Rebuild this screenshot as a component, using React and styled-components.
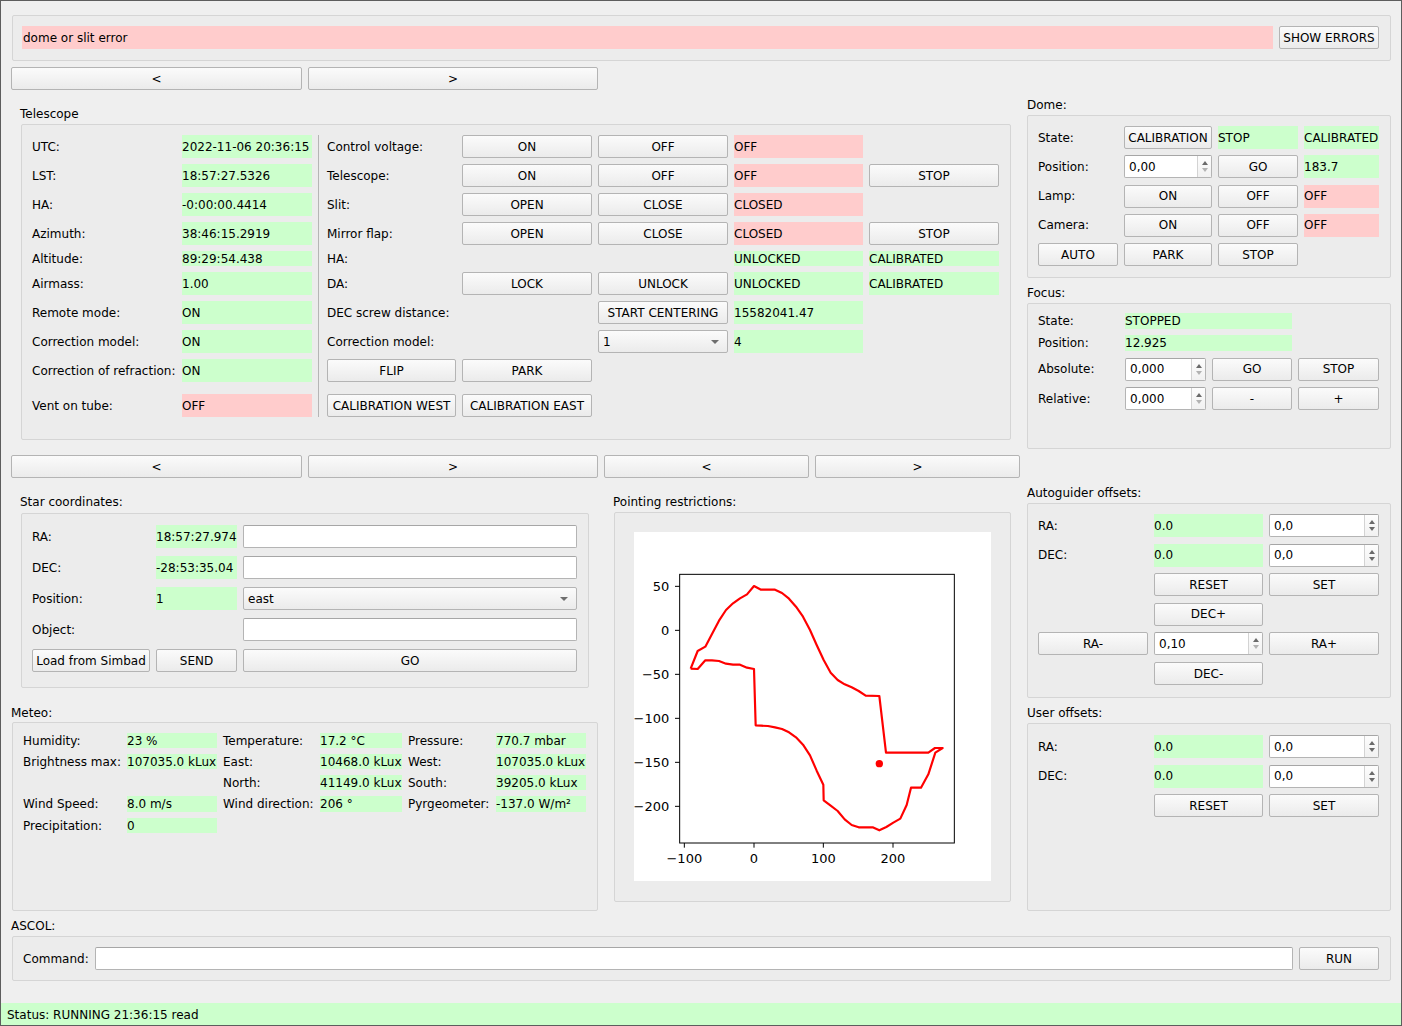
import React from 'react';
import styled, { createGlobalStyle, css } from 'styled-components';

const Global = createGlobalStyle`
  * { box-sizing: border-box; }
  html, body { margin: 0; padding: 0; background: #efefef; }
  body { font-family: "DejaVu Sans", "Liberation Sans", sans-serif; font-size: 12px; color: #000; }
`;

const cellMix = css`
  grid-column: span ${p => p.$span || 1};
  ${p => p.$end && css`align-self: end; height: 23px;`}
`;

const Window = styled.div`
  width: 1402px;
  height: 1026px;
  border: 1px solid #5d5d5d;
  background: #efefef;
  display: flex;
  flex-direction: column;
  font-family: "DejaVu Sans", "Liberation Sans", sans-serif;
  font-size: 12px;
  color: #000;
  overflow: hidden;
`;

const Body = styled.div`
  flex: 1;
  padding: 14px 10px 0;
  display: flex;
  flex-direction: column;
`;

const Group = styled.div`
  background: #ececec;
  border: 1px solid #d5d5d5;
  border-radius: 2px;
  width: ${p => p.$w}px;
  margin-left: ${p => p.$ml || 0}px;
  padding: ${p => p.$pad};
`;

const ErrorGroup = styled(Group)`
  display: flex;
  gap: 6px;
`;

const ErrorText = styled.div`
  flex: 1;
  height: 23px;
  background: #ffcccc;
  display: flex;
  align-items: center;
  padding-left: 1px;
`;

const Title = styled.div`
  height: 14px;
  line-height: 16px;
  white-space: nowrap;
  margin-top: ${p => p.$mt || 0}px;
  margin-bottom: ${p => (p.$mb === undefined ? 4 : p.$mb)}px;
  margin-left: ${p => p.$ml || 0}px;
`;

const Btn = styled.button`
  height: 23px;
  width: ${p => (p.$w ? `${p.$w}px` : '100%')};
  flex: none;
  padding: 0;
  margin: 0;
  font: inherit;
  color: #000;
  border: 1px solid #b4b4b4;
  border-radius: 2px;
  background: linear-gradient(to bottom, #fbfbfb, #ebebeb);
  white-space: nowrap;
  overflow: hidden;
  ${cellMix}
`;

const Val = styled.div`
  background: ${p => (p.$bad ? '#ffcccc' : '#ccffcc')};
  display: flex;
  align-items: center;
  white-space: nowrap;
  overflow: hidden;
  ${cellMix}
`;

const Lbl = styled.div`
  display: flex;
  align-items: center;
  white-space: nowrap;
  ${cellMix}
`;

const Grid = styled.div`
  display: grid;
  grid-template-columns: ${p => p.$cols};
  grid-template-rows: ${p => p.$rows};
  column-gap: 6px;
  row-gap: ${p => p.$rg}px;
`;

const Sep = styled.div`
  grid-column: 3;
  grid-row: 1 / -1;
  border-left: 1px solid #b5b5b5;
`;

const MainRow = styled.div`
  display: flex;
  gap: 7px;
  margin-top: 6px;
`;

const Col = styled.div`
  width: ${p => p.$w}px;
  display: flex;
  flex-direction: column;
`;

const NavRow = styled.div`
  display: flex;
  gap: 6px;
  margin-top: ${p => p.$mt || 0}px;
`;

const LowerRow = styled.div`
  display: flex;
  gap: 6px;
`;

const Field = styled.div`
  height: 23px;
  background: #fff;
  border: 1px solid #b4b4b4;
  border-top-color: #a6a6a6;
  border-radius: 2px;
  display: flex;
  align-items: stretch;
  overflow: hidden;
  ${p => p.$flex && 'flex: 1;'}
  ${cellMix}
`;

const FieldText = styled.div`
  flex: 1;
  display: flex;
  align-items: center;
  padding-left: 4px;
  white-space: nowrap;
`;

const SpinArrows = styled.div`
  width: 14px;
  border-left: 1px solid #d3d3d3;
  background: linear-gradient(to bottom, #fdfdfd, #f1f1f1);
  display: flex;
  flex-direction: column;
  align-items: center;
  justify-content: center;
  gap: 3px;
`;

const ArrowUp = styled.div`
  width: 0;
  height: 0;
  border-left: 3.5px solid transparent;
  border-right: 3.5px solid transparent;
  border-bottom: 4px solid ${p => p.$c};
`;

const ArrowDown = styled.div`
  width: 0;
  height: 0;
  border-left: 3.5px solid transparent;
  border-right: 3.5px solid transparent;
  border-top: 4px solid ${p => p.$c};
`;

const Combo = styled.div`
  height: 23px;
  border: 1px solid #b4b4b4;
  border-radius: 2px;
  background: linear-gradient(to bottom, #fbfbfb, #ebebeb);
  display: flex;
  align-items: center;
  justify-content: space-between;
  padding: 0 8px 0 4px;
  ${cellMix}
`;

const ComboArrow = styled.div`
  width: 0;
  height: 0;
  border-left: 4px solid transparent;
  border-right: 4px solid transparent;
  border-top: 4px solid #6e6e6e;
`;

const CmdRow = styled(Group)`
  display: flex;
  align-items: center;
  gap: 6px;
`;

const StatusBar = styled.div`
  height: 22px;
  background: #ccffcc;
  display: flex;
  align-items: center;
  padding-left: 6px;
  padding-top: 1px;
  margin-top: auto;
  flex: none;
`;

const ChartBox = styled.div`
  width: 357px;
  height: 349px;
  background: #fff;
  svg { display: block; }
`;

const Spin = ({ v, dim, ...rest }) => (
  <Field {...rest}>
    <FieldText>{v}</FieldText>
    <SpinArrows>
      <ArrowUp $c="#6a6a6a" />
      <ArrowDown $c={dim ? '#b2b2b2' : '#6a6a6a'} />
    </SpinArrows>
  </Field>
);

const E = () => <span />;

const curve = [
  [272, 566], [293, 513], [316, 500], [336, 462], [357, 422], [378, 390], [399, 370], [420, 355],
  [441, 343], [462, 318], [483, 329], [525, 329], [546, 339], [567, 356], [588, 380], [609, 410],
  [630, 450], [650, 495], [671, 540], [692, 578], [713, 600], [734, 613], [755, 622], [776, 633],
  [797, 647], [838, 648], [858, 818], [985, 818], [1005, 804], [1028, 804], [1006, 818], [985, 883],
  [963, 923], [933, 923], [920, 975], [901, 1016], [880, 1028], [859, 1041], [838, 1051], [818, 1042],
  [776, 1042], [755, 1035], [734, 1018], [713, 993], [692, 977], [671, 961], [670, 914], [650, 872],
  [630, 826], [609, 794], [588, 772], [567, 757], [546, 747], [525, 742], [504, 738], [483, 737],
  [467, 736], [462, 567], [441, 563], [420, 554], [399, 554], [378, 551], [357, 543], [336, 541],
  [316, 541], [293, 567], [272, 566],
];

const yTicks = [[319, '50'], [451, '0'], [583, '\u221250'], [715, '\u2212100'], [847, '\u2212150'], [979, '\u2212200']];
const xTicks = [[253, '\u2212100'], [462, '0'], [670, '100'], [879, '200']];

const Chart = () => (
  <ChartBox>
    <svg width="357" height="349" viewBox="102 156 1071 1047">
      <polyline
        points={curve.map(p => p.join(',')).join(' ')}
        fill="none"
        stroke="#ff0000"
        strokeWidth="6.5"
        strokeLinejoin="round"
      />
      <circle cx="838" cy="851" r="11" fill="#ff0000" />
      <rect x="239" y="283" width="824" height="806" fill="none" stroke="#000" strokeWidth="3" />
      {yTicks.map(([y, t]) => (
        <g key={t}>
          <line x1="225" y1={y} x2="239" y2={y} stroke="#000" strokeWidth="3" />
          <text x="208" y={y + 14} textAnchor="end" fontSize="39" fontFamily="DejaVu Sans, sans-serif" fill="#000">{t}</text>
        </g>
      ))}
      {xTicks.map(([x, t]) => (
        <g key={t}>
          <line x1={x} y1="1089" x2={x} y2="1103" stroke="#000" strokeWidth="3" />
          <text x={x} y="1148" textAnchor="middle" fontSize="39" fontFamily="DejaVu Sans, sans-serif" fill="#000">{t}</text>
        </g>
      ))}
    </svg>
  </ChartBox>
);

export default function App() {
  return (
    <>
      <Global />
      <Window>
        <Body>
          <ErrorGroup $w={1379} $ml={1} $pad="10px 11px 11px 9px">
            <ErrorText>dome or slit error</ErrorText>
            <Btn $w={100}>SHOW ERRORS</Btn>
          </ErrorGroup>

          <MainRow>
            <Col $w={1009}>
              <NavRow>
                <Btn $w={291}>&lt;</Btn>
                <Btn $w={290}>&gt;</Btn>
              </NavRow>
              <Title $mt={16} $ml={9}>Telescope</Title>
              <Group $w={990} $ml={10} $pad="10px 11px 22px 10px">
                <Grid
                  $cols="144px 130px 3px 129px 130px 130px 129px 130px"
                  $rows="23px 23px 23px 23px 15px 23px 23px 23px 23px 29px"
                  $rg={6}
                >
                  <Sep />
                  <Lbl>UTC:</Lbl><Val>2022-11-06 20:36:15</Val>
                  <Lbl>Control voltage:</Lbl><Btn>ON</Btn><Btn>OFF</Btn><Val $bad>OFF</Val><E />

                  <Lbl>LST:</Lbl><Val>18:57:27.5326</Val>
                  <Lbl>Telescope:</Lbl><Btn>ON</Btn><Btn>OFF</Btn><Val $bad>OFF</Val><Btn>STOP</Btn>

                  <Lbl>HA:</Lbl><Val>-0:00:00.4414</Val>
                  <Lbl>Slit:</Lbl><Btn>OPEN</Btn><Btn>CLOSE</Btn><Val $bad>CLOSED</Val><E />

                  <Lbl>Azimuth:</Lbl><Val>38:46:15.2919</Val>
                  <Lbl>Mirror flap:</Lbl><Btn>OPEN</Btn><Btn>CLOSE</Btn><Val $bad>CLOSED</Val><Btn>STOP</Btn>

                  <Lbl>Altitude:</Lbl><Val>89:29:54.438</Val>
                  <Lbl>HA:</Lbl><E /><E /><Val>UNLOCKED</Val><Val>CALIBRATED</Val>

                  <Lbl>Airmass:</Lbl><Val>1.00</Val>
                  <Lbl>DA:</Lbl><Btn>LOCK</Btn><Btn>UNLOCK</Btn><Val>UNLOCKED</Val><Val>CALIBRATED</Val>

                  <Lbl>Remote mode:</Lbl><Val>ON</Val>
                  <Lbl>DEC screw distance:</Lbl><E /><Btn>START CENTERING</Btn><Val>15582041.47</Val><E />

                  <Lbl>Correction model:</Lbl><Val>ON</Val>
                  <Lbl>Correction model:</Lbl><E />
                  <Combo><span>1</span><ComboArrow /></Combo>
                  <Val>4</Val><E />

                  <Lbl>Correction of refraction:</Lbl><Val>ON</Val>
                  <Btn>FLIP</Btn><Btn>PARK</Btn><E /><E /><E />

                  <Lbl $end>Vent on tube:</Lbl><Val $end $bad>OFF</Val>
                  <Btn $end>CALIBRATION WEST</Btn><Btn $end>CALIBRATION EAST</Btn><E /><E /><E />
                </Grid>
              </Group>

              <NavRow $mt={15}>
                <Btn $w={291}>&lt;</Btn>
                <Btn $w={290}>&gt;</Btn>
                <Btn $w={205}>&lt;</Btn>
                <Btn $w={205}>&gt;</Btn>
              </NavRow>

              <LowerRow>
                <Col $w={587}>
                  <Title $mt={16} $mb={5} $ml={9}>Star coordinates:</Title>
                  <Group $w={568} $ml={10} $pad="11px 11px 15px 10px">
                    <Grid $cols="118px 81px 334px" $rows="repeat(5, 23px)" $rg={8}>
                      <Lbl>RA:</Lbl><Val>18:57:27.974</Val><Field />
                      <Lbl>DEC:</Lbl><Val>-28:53:35.04</Val><Field />
                      <Lbl>Position:</Lbl><Val>1</Val>
                      <Combo><span>east</span><ComboArrow /></Combo>
                      <Lbl>Object:</Lbl><E /><Field />
                      <Btn>Load from Simbad</Btn><Btn>SEND</Btn><Btn>GO</Btn>
                    </Grid>
                  </Group>

                  <Title $mt={17} $mb={3}>Meteo:</Title>
                  <Group $w={586} $ml={1} $pad="10px 10px 77px 10px">
                    <Grid $cols="98px 90px 91px 82px 82px 90px" $rows="15px 15px 15px 16px 15px" $rg={6}>
                      <Lbl>Humidity:</Lbl><Val>23 %</Val>
                      <Lbl>Temperature:</Lbl><Val>17.2 °C</Val>
                      <Lbl>Pressure:</Lbl><Val>770.7 mbar</Val>

                      <Lbl>Brightness max:</Lbl><Val>107035.0 kLux</Val>
                      <Lbl>East:</Lbl><Val>10468.0 kLux</Val>
                      <Lbl>West:</Lbl><Val>107035.0 kLux</Val>

                      <E /><E />
                      <Lbl>North:</Lbl><Val>41149.0 kLux</Val>
                      <Lbl>South:</Lbl><Val>39205.0 kLux</Val>

                      <Lbl>Wind Speed:</Lbl><Val>8.0 m/s</Val>
                      <Lbl>Wind direction:</Lbl><Val>206 °</Val>
                      <Lbl>Pyrgeometer:</Lbl><Val>-137.0 W/m²</Val>

                      <Lbl>Precipitation:</Lbl><Val>0</Val>
                    </Grid>
                  </Group>
                </Col>

                <Col $w={416}>
                  <Title $mt={16} $ml={9}>Pointing restrictions:</Title>
                  <Group $w={397} $ml={10} $pad="19px 19px 20px 19px">
                    <Chart />
                  </Group>
                </Col>
              </LowerRow>
            </Col>

            <Col $w={364}>
              <Title $mt={30}>Dome:</Title>
              <Group $w={364} $pad="10px 11px 11px 10px">
                <Grid $cols="80px 88px 80px 75px" $rows="repeat(5, 23px)" $rg={6.3}>
                  <Lbl>State:</Lbl><Btn>CALIBRATION</Btn><Val>STOP</Val><Val>CALIBRATED</Val>
                  <Lbl>Position:</Lbl><Spin v="0,00" dim /><Btn>GO</Btn><Val>183.7</Val>
                  <Lbl>Lamp:</Lbl><Btn>ON</Btn><Btn>OFF</Btn><Val $bad>OFF</Val>
                  <Lbl>Camera:</Lbl><Btn>ON</Btn><Btn>OFF</Btn><Val $bad>OFF</Val>
                  <Btn>AUTO</Btn><Btn>PARK</Btn><Btn>STOP</Btn><E />
                </Grid>
              </Group>

              <Title $mt={7}>Focus:</Title>
              <Group $w={364} $pad="9px 11px 38px 10px">
                <Grid $cols="81px 81px 80px 81px" $rows="16px 16px 23px 23px" $rg={6.3}>
                  <Lbl>State:</Lbl><Val $span={2}>STOPPED</Val><E />
                  <Lbl>Position:</Lbl><Val $span={2}>12.925</Val><E />
                  <Lbl>Absolute:</Lbl><Spin v="0,000" dim /><Btn>GO</Btn><Btn>STOP</Btn>
                  <Lbl>Relative:</Lbl><Spin v="0,000" dim /><Btn>-</Btn><Btn>+</Btn>
                </Grid>
              </Group>

              <Title $mt={36}>Autoguider offsets:</Title>
              <Group $w={364} $pad="10px 11px 12px 10px">
                <Grid $cols="110px 109px 110px" $rows="repeat(6, 23px)" $rg={6.6}>
                  <Lbl>RA:</Lbl><Val>0.0</Val><Spin v="0,0" />
                  <Lbl>DEC:</Lbl><Val>0.0</Val><Spin v="0,0" />
                  <E /><Btn>RESET</Btn><Btn>SET</Btn>
                  <E /><Btn>DEC+</Btn><E />
                  <Btn>RA-</Btn><Spin v="0,10" dim /><Btn>RA+</Btn>
                  <E /><Btn>DEC-</Btn><E />
                </Grid>
              </Group>

              <Title $mt={7}>User offsets:</Title>
              <Group $w={364} $pad="11px 11px 93px 10px">
                <Grid $cols="110px 109px 110px" $rows="repeat(3, 23px)" $rg={6.6}>
                  <Lbl>RA:</Lbl><Val>0.0</Val><Spin v="0,0" />
                  <Lbl>DEC:</Lbl><Val>0.0</Val><Spin v="0,0" />
                  <E /><Btn>RESET</Btn><Btn>SET</Btn>
                </Grid>
              </Group>
            </Col>
          </MainRow>

          <Title $mt={7}>ASCOL:</Title>
          <CmdRow $w={1379} $ml={1} $pad="10px 11px 10px 10px">
            <span>Command:</span>
            <Field $flex />
            <Btn $w={80}>RUN</Btn>
          </CmdRow>
        </Body>
        <StatusBar>Status: RUNNING 21:36:15 read</StatusBar>
      </Window>
    </>
  );
}
